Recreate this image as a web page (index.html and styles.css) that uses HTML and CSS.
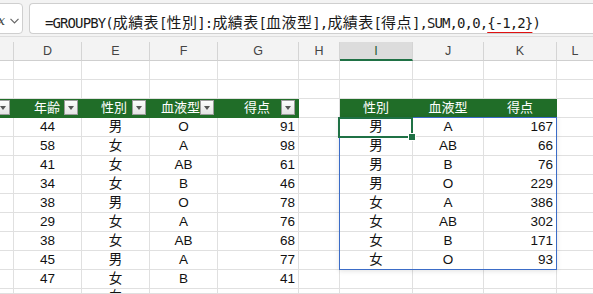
FILE: index.html
```html
<!DOCTYPE html>
<html lang="ja">
<head>
<meta charset="utf-8">
<link rel="stylesheet" href="styles.css">
</head>
<body>
<div class="top">
  <div class="bar">
    <div class="namebox"><span class="fxx">x</span><svg class="chev" width="9" height="6" viewBox="0 0 9 6"><path d="M0.5 0.8 L4.5 4.8 L8.5 0.8" fill="none" stroke="#666" stroke-width="1.2"/></svg></div>
    <div class="formula"><span class="ftext">=GROUPBY(<span class="cj">成績表</span>[<span class="cj">性別</span>]:<span class="cj">成績表</span>[<span class="cj">血液型</span>],<span class="cj">成績表</span>[<span class="cj">得点</span>],SUM,0,0,<span class="err">{-1,2}</span>)</span></div>
  </div>
</div>
<div class="sheet">
  <div class="c h"></div><div class="c h">D</div><div class="c h">E</div><div class="c h">F</div><div class="c h">G</div><div class="c h">H</div><div class="c h selh">I</div><div class="c h">J</div><div class="c h">K</div><div class="c h">L</div>

  <div class="c"></div><div class="c"></div><div class="c"></div><div class="c"></div><div class="c"></div><div class="c"></div><div class="c"></div><div class="c"></div><div class="c"></div><div class="c"></div>
  <div class="c"></div><div class="c"></div><div class="c"></div><div class="c"></div><div class="c"></div><div class="c"></div><div class="c"></div><div class="c"></div><div class="c"></div><div class="c"></div>

  <div class="c g"><span class="dd"></span></div>
  <div class="c g hd-d">年齢<span class="dd"></span></div>
  <div class="c g hd-e">性別<span class="dd"></span></div>
  <div class="c g hd-f">血液型<span class="dd"></span></div>
  <div class="c g hd-g">得点<span class="dd"></span></div>
  <div class="c"></div>
  <div class="c g2">性別</div><div class="c g2">血液型</div><div class="c g2">得点</div>
  <div class="c"></div>

  <div class="c"></div><div class="c">44</div><div class="c">男</div><div class="c">O</div><div class="c r">91</div><div class="c"></div><div class="c">男</div><div class="c">A</div><div class="c r">167</div><div class="c"></div>
  <div class="c"></div><div class="c">58</div><div class="c">女</div><div class="c">A</div><div class="c r">98</div><div class="c"></div><div class="c">男</div><div class="c">AB</div><div class="c r">66</div><div class="c"></div>
  <div class="c"></div><div class="c">41</div><div class="c">女</div><div class="c">AB</div><div class="c r">61</div><div class="c"></div><div class="c">男</div><div class="c">B</div><div class="c r">76</div><div class="c"></div>
  <div class="c"></div><div class="c">34</div><div class="c">女</div><div class="c">B</div><div class="c r">46</div><div class="c"></div><div class="c">男</div><div class="c">O</div><div class="c r">229</div><div class="c"></div>
  <div class="c"></div><div class="c">38</div><div class="c">男</div><div class="c">O</div><div class="c r">78</div><div class="c"></div><div class="c">女</div><div class="c">A</div><div class="c r">386</div><div class="c"></div>
  <div class="c"></div><div class="c">29</div><div class="c">女</div><div class="c">A</div><div class="c r">76</div><div class="c"></div><div class="c">女</div><div class="c">AB</div><div class="c r">302</div><div class="c"></div>
  <div class="c"></div><div class="c">38</div><div class="c">女</div><div class="c">AB</div><div class="c r">68</div><div class="c"></div><div class="c">女</div><div class="c">B</div><div class="c r">171</div><div class="c"></div>
  <div class="c"></div><div class="c">45</div><div class="c">男</div><div class="c">A</div><div class="c r">77</div><div class="c"></div><div class="c">女</div><div class="c">O</div><div class="c r">93</div><div class="c"></div>
  <div class="c"></div><div class="c">47</div><div class="c">女</div><div class="c">B</div><div class="c r">41</div><div class="c"></div><div class="c"></div><div class="c"></div><div class="c"></div><div class="c"></div>
  <div class="c"></div><div class="c"></div><div class="c last">女</div><div class="c"></div><div class="c"></div><div class="c"></div><div class="c"></div><div class="c"></div><div class="c"></div><div class="c"></div>

  <div class="spill"></div>
  <div class="selcell"><span class="handle"></span></div>
</div>
</body>
</html>
```
FILE: styles.css
```css
html, body {
  margin: 0;
  padding: 0;
  background: #fff;
  overflow: hidden;
}
body {
  width: 593px;
  height: 294px;
  font-family: "Liberation Sans", "Noto Sans CJK JP", sans-serif;
}
.top {
  background: #f3f3f3;
  height: 42px;
  box-sizing: border-box;
}
.bar {
  display: flex;
  height: 37px;
  box-sizing: border-box;
  padding-top: 3px;
  border-bottom: 1px solid #dedede;
}
.namebox {
  margin-left: -12px;
  width: 35px;
  height: 31px;
  box-sizing: border-box;
  background: #fff;
  border: 1px solid #cfcfcf;
  border-radius: 4px;
  display: flex;
  align-items: center;
  justify-content: flex-end;
  gap: 5px;
  padding-right: 3px;
  padding-top: 4px;
}
.fxx {
  font-family: "DejaVu Serif", serif;
  font-style: italic;
  font-size: 13px;
  color: #444;
}
.chev { margin-top: 1px; flex: none; }
.formula {
  margin-left: 6px;
  flex: 1;
  height: 31px;
  box-sizing: border-box;
  background: #fff;
  border: 1px solid #cfcfcf;
  border-right: none;
  border-radius: 4px 0 0 4px;
  display: flex;
  align-items: center;
  padding-left: 15px;
  padding-top: 6px;
  white-space: nowrap;
  overflow: hidden;
}
.ftext {
  font-family: "DejaVu Sans Mono", monospace;
  font-size: 14px;
  letter-spacing: -0.9px;
  color: #1a1a1a;
}
.cj {
  font-family: "Noto Sans CJK JP", sans-serif;
  font-size: 15px;
  letter-spacing: 0.4px;
}
.err {
  text-decoration: underline;
  text-decoration-color: #e01010;
  text-decoration-thickness: 1px;
  text-underline-offset: 4px;
}
.sheet {
  display: grid;
  grid-template-columns: 14px 68px 68px 68px 81px 41px 73px 71px 73px 37px;
  grid-template-rows: repeat(13, 19px) 5px;
  height: 252px;
  overflow: hidden;
  position: relative;
}
.c {
  box-sizing: border-box;
  border-right: 1px solid #e0e0e0;
  border-bottom: 1px solid #e0e0e0;
  display: flex;
  align-items: center;
  justify-content: center;
  white-space: nowrap;
  overflow: hidden;
  font-size: 13.5px;
  line-height: 18px;
  color: #111;
}
.last {
  align-items: flex-start;
  font-size: 12px;
  line-height: 12px;
  padding-top: 1px;
}
.r {
  justify-content: flex-end;
  padding-right: 3px;
}
.h {
  background: #f3f3f3;
  border-right-color: #d4d4d4;
  border-bottom-color: #cfcfcf;
  font-size: 12.5px;
  color: #444;
}
.selh {
  background: #dcdcdc;
  border-bottom: 2px solid #1f7145;
  color: #1d5a34;
}
.g {
  background: #206d28;
  border-color: #206d28;
  color: #fff;
  font-size: 13px;
  position: relative;
  overflow: visible;
}
.g2 {
  background: #206d28;
  border-color: #206d28;
  color: #fff;
  font-size: 13px;
}
.hd-d { justify-content: flex-end; padding-right: 21px; }
.hd-e { justify-content: flex-end; padding-right: 22px; }
.hd-f { justify-content: flex-end; padding-right: 17px; }
.hd-g { justify-content: center; padding-right: 2px; }
.dd {
  position: absolute;
  right: 3px;
  top: 1px;
  width: 14px;
  height: 15px;
  box-sizing: border-box;
  background: linear-gradient(#fdfdfd, #e4e4e4);
  border: 1px solid #9c9c9c;
  z-index: 2;
}
.dd::after {
  content: "";
  position: absolute;
  left: 3px;
  top: 5px;
  border-left: 3.5px solid transparent;
  border-right: 3.5px solid transparent;
  border-top: 4px solid #555;
}
.spill {
  position: absolute;
  left: 339px;
  top: 75px;
  width: 218px;
  height: 153px;
  box-sizing: border-box;
  border: 1px solid #3b6cc7;
  box-shadow: 0 1px 5px rgba(0, 0, 0, 0.12);
  pointer-events: none;
}
.selcell {
  position: absolute;
  left: 338px;
  top: 75px;
  width: 75px;
  height: 21px;
  box-sizing: border-box;
  border: 2px solid #1f7145;
}
.handle {
  position: absolute;
  right: -5px;
  bottom: -5px;
  width: 6px;
  height: 6px;
  background: #1f7145;
  border: 1px solid #fff;
}
```
